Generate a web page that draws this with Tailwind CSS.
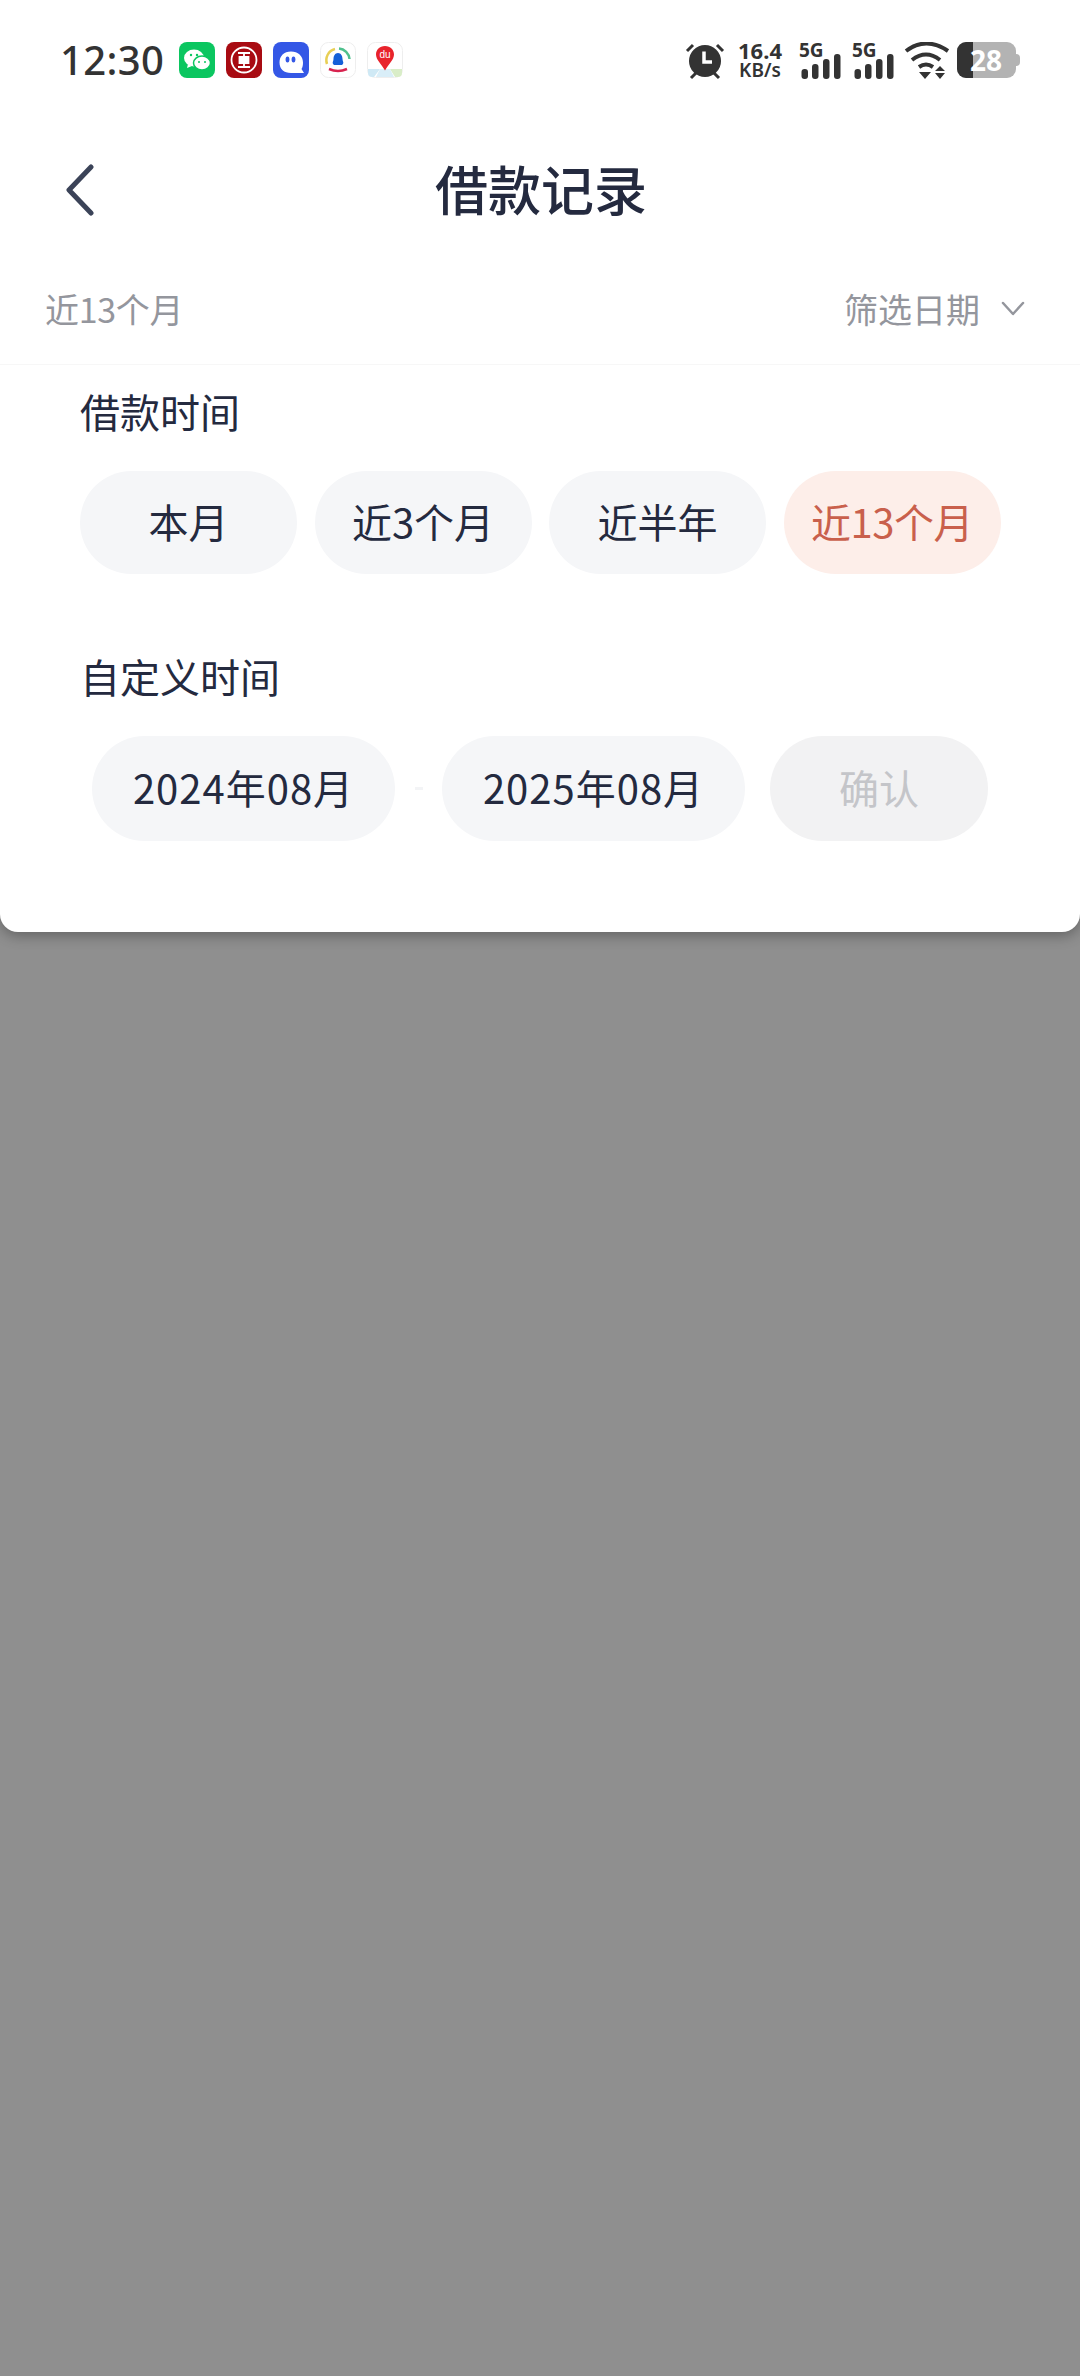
<!doctype html>
<html lang="zh"><head><meta charset="utf-8"><script src="https://cdn.jsdelivr.net/npm/@tailwindcss/browser@4"></script></head>
<body class="m-0">
<div class="w-[1080px] h-[2376px] bg-[#8f8f8f] overflow-hidden font-['Noto_Sans_CJK_SC','Noto_Sans',sans-serif] relative">
<div class="bg-white h-[932px] rounded-b-[18px] shadow-[0_4px_14px_rgba(0,0,0,0.3)] flex flex-col">
  <!-- status bar -->
  <div class="h-[118px] pt-[42px] flex items-start justify-between pl-[60px] pr-[60px] shrink-0">
    <div class="flex items-center h-[36px]">
      <span class="font-['Noto_Sans'] font-[550] text-[40px] leading-none text-[#333] w-[119px] tracking-[0.4px]">12:30</span>
      <div class="flex items-center gap-[11px]">
        <svg width="36" height="36" viewBox="0 0 36 36"><rect width="36" height="36" rx="8" fill="#0bc660"/><ellipse cx="15" cy="16" rx="10" ry="8.5" fill="#fff"/><path d="M9 22l-1 4 5-2z" fill="#fff"/><ellipse cx="23" cy="21" rx="8.5" ry="7" fill="#fff" stroke="#0bc660" stroke-width="1.5"/><circle cx="12" cy="13" r="1.2" fill="#0bc660"/><circle cx="18" cy="13" r="1.2" fill="#0bc660"/><circle cx="20" cy="20" r="1" fill="#0bc660"/><circle cx="26" cy="20" r="1" fill="#0bc660"/></svg>
        <svg width="36" height="36" viewBox="0 0 36 36"><rect width="36" height="36" rx="8" fill="#a80b12"/><circle cx="18" cy="18" r="12.500" fill="none" stroke="#fff" stroke-width="1.800"/><path d="M12 11h12M12 25h12M13.500 15h9v2h-9zM13.500 19h9v2h-9zM18 11v4M18 21v4" fill="none" stroke="#fff" stroke-width="1.800"/></svg>
        <svg width="36" height="36" viewBox="0 0 36 36"><rect width="36" height="36" rx="8" fill="#3457e6"/><path d="M18 9.500c7 0 12 4.500 12 11 0 3-.5 5-1.500 6.500l2.500 4H18C11 31 6.500 27 6.500 20.500S11 9.500 18 9.500z" fill="#fff"/><ellipse cx="14.500" cy="17.500" rx="1.900" ry="3" fill="#3457e6"/><ellipse cx="20.500" cy="17.500" rx="1.900" ry="3" fill="#3457e6"/></svg>
        <svg width="36" height="36" viewBox="0 0 36 36"><rect x=".5" y=".5" width="35" height="35" rx="8" fill="#fff" stroke="#eeeeee"/><path d="M7 22A11.500 11.500 0 0 1 15 7" fill="none" stroke="#e8cf55" stroke-width="2.500"/><path d="M19 6.500A11.500 11.500 0 0 1 29.500 17" fill="none" stroke="#4fc08d" stroke-width="2.500"/><path d="M9 27q9 4 18 0" fill="none" stroke="#d8234f" stroke-width="2.500"/><path d="M18 11c3 0 4.500 3 4.500 6 0 2 1.500 3.500.5 5s-3 1-5 1-4 .5-5-1 .5-3 .5-5c0-3 1.500-6 4.500-6z" fill="#1560d8"/></svg>
        <svg width="36" height="36" viewBox="0 0 36 36"><rect x=".5" y=".5" width="35" height="35" rx="8" fill="#fff" stroke="#eeeeee"/><path d="M1 27l12 0-6 8H5q-4 0-4-4z" fill="#cfe9f5"/><path d="M23 27h12v4q0 4-4 4h-3z" fill="#d9edc8"/><path d="M13 27h10l4 8H9z" fill="#d9eef8"/><path d="M18 4c5.500 0 9 3.800 9 8.500 0 5-5 9-9 16-4-7-9-11-9-16C9 7.800 12.500 4 18 4z" fill="#e8232c"/><text x="18" y="15.500" text-anchor="middle" font-size="10" font-family="Liberation Sans" fill="#fff">du</text></svg>
      </div>
    </div>
    <div class="flex items-center h-[38px] relative w-[340px]">
      <svg class="absolute left-[5px] top-0" width="40" height="38" viewBox="0 0 40 38"><circle cx="20" cy="19" r="16" fill="#333"/><path d="M19 9.500v10.500h8" fill="none" stroke="#fff" stroke-width="3.500"/><path d="M2 9l6-6M38 9l-6-6M6 36l5-5M34 36l-5-5" stroke="#333" stroke-width="3" fill="none"/></svg>
      <div class="absolute left-[56px] top-[-3px] w-[48px] text-center font-['Noto_Sans'] font-bold text-[#333]"><div class="text-[22px] leading-[22px]">16.4</div><div class="text-[19px] leading-[19px] font-semibold">KB/s</div></div>
      <div class="absolute left-[119px] top-0 w-[44px] h-[38px]"><span class="absolute left-0 top-[-2px] font-['Noto_Sans'] font-bold text-[19px] leading-[20px] text-[#333]">5G</span><svg class="absolute left-0 top-0" width="44" height="38"><rect x="2.500" y="27" width="6.500" height="10" rx="3" fill="#333"/><rect x="13" y="22" width="6.500" height="15" rx="3" fill="#333"/><rect x="24" y="17" width="6.500" height="20" rx="3" fill="#333"/><rect x="35" y="12" width="6.500" height="25" rx="3" fill="#333"/></svg></div>
      <div class="absolute left-[172px] top-0 w-[44px] h-[38px]"><span class="absolute left-0 top-[-2px] font-['Noto_Sans'] font-bold text-[19px] leading-[20px] text-[#333]">5G</span><svg class="absolute left-0 top-0" width="44" height="38"><rect x="2.500" y="27" width="6.500" height="10" rx="3" fill="#333"/><rect x="13" y="22" width="6.500" height="15" rx="3" fill="#333"/><rect x="24" y="17" width="6.500" height="20" rx="3" fill="#333"/><rect x="35" y="12" width="6.500" height="25" rx="3" fill="#333"/></svg></div>
      <svg class="absolute left-[224px] top-0" width="46" height="38" viewBox="0 0 46 38"><path d="M2 9Q22-6 44 9M8 18q14-11 28 0M15 25q7-5 14 0" fill="none" stroke="#333" stroke-width="4"/><path d="M15 30h12l-6 7zM36 24l5 5H31zM36 37l5-6H31z" fill="#333"/></svg>
      <div class="absolute left-[277px] top-0 w-[59px] h-[36px] rounded-[9px] bg-[#b3b3b3] overflow-hidden"><div class="w-[16px] h-full bg-[#333]"></div><span class="absolute left-[13px] top-0 leading-[36px] font-['Noto_Sans'] font-bold text-[28px] text-white">28</span></div>
      <div class="absolute left-[336px] top-[12px] w-[4px] h-[12px] bg-[#b3b3b3] rounded-r"></div>
    </div>
  </div>
  <!-- nav -->
  <div class="h-[148px] relative flex items-center justify-center shrink-0">
    <svg class="absolute left-[64px] top-[46px]" width="32" height="52" viewBox="0 0 32 52"><path d="M27 3 5 26l22 23" fill="none" stroke="#3b4358" stroke-width="5" stroke-linecap="round" stroke-linejoin="round"/></svg>
    <h1 class="text-[53px] leading-none font-medium text-[#242a3f] relative top-[-4px] left-[1px]">借款记录</h1>
  </div>
  <!-- filter row -->
  <div class="h-[99px] flex items-center justify-between pl-[45px] pr-[55px] border-b border-[#f7f7f7] shrink-0 pb-[12px]">
    <span class="text-[34px] leading-none tracking-[-0.3px] text-[#94969d]">近13个月</span>
    <div class="flex items-center gap-[21px]">
      <span class="text-[34px] leading-none text-[#94969d]">筛选日期</span>
      <svg width="24" height="16" viewBox="0 0 24 16"><path d="M2 2l10 11L22 2" fill="none" stroke="#94969d" stroke-width="2.500" stroke-linecap="round" stroke-linejoin="round"/></svg>
    </div>
  </div>
  <!-- panel -->
  <div class="pl-[80px] pt-[22px]">
    <div class="text-[40px] leading-[48px] text-[#242a3f]">借款时间</div>
    <div class="mt-[36px] flex gap-[17.5px]">
      <div class="w-[217px] h-[103px] pb-[3px] rounded-full bg-[#f5f6f8] flex items-center justify-center text-[40px] text-[#242a3f]">本月</div>
      <div class="w-[217px] h-[103px] pb-[3px] rounded-full bg-[#f5f6f8] flex items-center justify-center text-[40px] text-[#242a3f]">近3个月</div>
      <div class="w-[217px] h-[103px] pb-[3px] rounded-full bg-[#f5f6f8] flex items-center justify-center text-[40px] text-[#242a3f]">近半年</div>
      <div class="w-[217px] h-[103px] pb-[3px] rounded-full bg-[#fdeee9] flex items-center justify-center text-[40px] tracking-[-0.5px] text-[#c9604c]">近13个月</div>
    </div>
    <div class="mt-[78px] text-[40px] leading-[48px] text-[#242a3f]">自定义时间</div>
    <div class="mt-[36px] flex items-center pl-[12px]">
      <div class="w-[303px] h-[105px] pb-[3px] rounded-full bg-[#f5f6f8] flex items-center justify-center text-[40px] tracking-[1px] text-[#242a3f]">2024年08月</div>
      <div class="w-[47px] flex justify-center"><div class="w-[8px] h-[3px] bg-[#f3f4f6]"></div></div>
      <div class="w-[303px] h-[105px] pb-[3px] rounded-full bg-[#f5f6f8] flex items-center justify-center text-[40px] tracking-[1px] text-[#242a3f]">2025年08月</div>
      <div class="ml-[25px] w-[218px] h-[105px] pb-[3px] rounded-full bg-[#f2f2f3] flex items-center justify-center text-[40px] text-[#c4c5c9]">确认</div>
    </div>
  </div>
</div>
</div>
</body></html>
